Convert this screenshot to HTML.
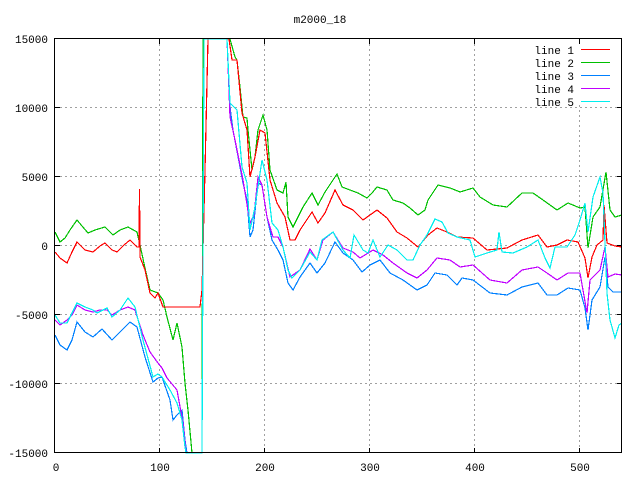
<!DOCTYPE html>
<html><head><meta charset="utf-8"><style>body{margin:0;background:#fff}svg{display:block}text{font-family:"Liberation Mono","DejaVu Sans Mono",monospace;font-size:11px;fill:#000}</style></head><body>
<svg width="640" height="480" viewBox="0 0 640 480" xmlns="http://www.w3.org/2000/svg">
<rect width="640" height="480" fill="#fff"/>
<g stroke="#a0a0a0" stroke-width="1" stroke-dasharray="2,3" shape-rendering="crispEdges">
<path d="M159.5 39V453M264.5 39V453M369.5 39V453M474.5 39V453M579.5 105V453"/>
<path d="M55 107.5H622M55 176.5H622M55 245.5H622M55 314.5H622M55 383.5H622"/>
</g>
<g fill="none" stroke-width="1.2" stroke-linejoin="miter" shape-rendering="crispEdges">
<polyline stroke="#00c000" points="55,232 60,242 65,238 70,230 77,220 82,226 88,233 95,230 105,227 113,235 120,230 128,227 137,232 140,245 145,268 150,290 158,293 163,300 167,317 173,340 177,323 182,347 185,383 188,410 192,453 202,453 203,39 229,39 230,39 235,57 237,60 240,87 243,117 247,118 248,130 252,170 255,157 258,130 263,115 267,130 270,170 277,190 283,193 286,182 288,217 293,227 303,207 312,193 318,205 325,192 337,174 342,187 350,190 358,193 367,198 372,193 377,187 387,190 393,200 403,203 410,208 418,215 425,210 428,200 438,185 450,188 460,192 473,188 480,197 493,205 507,207 522,193 533,193 543,200 557,210 568,203 580,208 585,207 588,248 593,217 600,207 606,172 610,210 615,217 622,215"/>
<polyline stroke="#ff0000" points="55,252 60,258 67,263 72,252 77,242 85,250 93,252 100,246 105,243 112,250 117,252 124,245 130,240 137,247 139,247 139.5,189 140,257 145,270 150,293 155,298 158,293 163,307 200,307 202,290 205,170 208,39 229,39 232,60 237,60 242,113 247,130 250,177 255,157 260,130 265,133 270,180 277,203 285,217 290,240 295,240 300,230 312,212 318,223 325,213 335,190 343,205 353,210 363,220 377,210 387,218 397,232 407,238 418,247 428,235 437,228 447,232 457,237 473,238 487,250 507,248 522,240 538,235 547,247 557,245 567,240 578,242 585,258 588,278 592,257 597,245 603,240 604,205 607,243 615,246 622,247"/>
<polyline stroke="#0080ff" points="55,335 60,345 67,350 72,340 77,322 85,332 93,337 102,329 112,340 120,332 130,322 137,327 145,357 153,382 158,378 162,377 170,400 173,420 177,415 182,410 185,440 187,453 202,453 204,39 227,39 230,107 233,130 240,167 243,183 247,200 250,237 253,230 258,183 262,185 267,217 272,240 278,250 283,260 288,283 293,290 300,277 310,263 317,273 325,263 335,242 343,253 353,260 362,272 370,265 380,260 390,273 403,280 417,290 427,285 435,273 447,275 457,285 462,278 473,280 490,293 507,295 522,287 538,283 547,295 557,295 568,288 580,290 585,308 588,330 592,300 600,287 605,257 608,287 613,292 622,292"/>
<polyline stroke="#c000ff" points="55,320 60,325 67,320 72,315 77,305 85,310 93,312 100,310 107,310 112,315 120,310 128,307 135,310 143,335 150,352 158,363 162,368 167,378 177,390 183,423 186,453 202,453 204,39 227,39 230,117 235,140 243,180 250,223 254,215 258,177 262,185 267,217 273,237 278,237 283,247 290,277 300,270 310,249 317,260 323,240 333,232 343,248 353,252 360,258 373,250 383,255 393,263 407,273 417,278 427,270 437,258 450,260 460,267 473,265 490,280 507,283 522,270 538,267 547,273 557,280 568,273 580,273 587,313 590,280 600,270 605,247 608,277 615,274 622,275"/>
<polyline stroke="#00eeee" points="55,315 60,323 67,323 72,313 77,303 85,307 93,310 97,313 107,308 112,317 120,310 128,298 135,307 143,340 153,377 158,374 162,377 170,390 177,403 182,420 185,447 186,453 202,453 204,39 227,39 230,103 237,110 242,167 247,183 250,230 255,207 262,160 267,180 272,223 278,230 283,247 288,270 292,278 300,270 310,252 317,260 322,240 333,232 343,250 350,258 354,235 363,250 368,253 373,240 380,257 388,245 397,250 407,260 413,260 420,245 427,235 435,219 442,222 448,233 457,237 470,240 475,257 487,253 497,250 499,232 502,252 513,253 527,247 538,240 545,258 550,268 555,247 567,247 575,235 580,220 585,203 588,232 593,197 600,177 603,193 607,293 610,320 615,338 619,325 622,323"/>
</g>
<rect x="481" y="40" width="140" height="65" fill="#fff"/>
<g text-anchor="end">
<text x="574" y="54">line 1</text>
<text x="574" y="67">line 2</text>
<text x="574" y="80">line 3</text>
<text x="574" y="93">line 4</text>
<text x="574" y="106">line 5</text>
</g>
<g stroke-width="1" shape-rendering="crispEdges">
<path d="M581 49.5H610" stroke="#ff0000"/>
<path d="M581 62.5H610" stroke="#00c000"/>
<path d="M581 75.5H610" stroke="#0080ff"/>
<path d="M581 88.5H610" stroke="#c000ff"/>
<path d="M581 101.5H610" stroke="#00eeee"/>
</g>
<rect x="54.5" y="38.5" width="567" height="414" fill="none" stroke="#000" shape-rendering="crispEdges"/>
<g stroke="#000" shape-rendering="crispEdges">
<path d="M55 107.5h5M55 176.5h5M55 245.5h5M55 314.5h5M55 383.5h5M622 107.5h-5M622 176.5h-5M622 245.5h-5M622 314.5h-5M622 383.5h-5"/>
<path d="M159.5 453v-5M264.5 453v-5M369.5 453v-5M474.5 453v-5M579.5 453v-5M159.5 39v5M264.5 39v5M369.5 39v5M474.5 39v5M579.5 39v5"/>
</g>
<g text-anchor="end">
<text x="48" y="43">15000</text>
<text x="48" y="112">10000</text>
<text x="48" y="181">5000</text>
<text x="48" y="250">0</text>
<text x="48" y="319">-5000</text>
<text x="48" y="388">-10000</text>
<text x="48" y="457">-15000</text>
</g>
<g text-anchor="middle">
<text x="56" y="471">0</text>
<text x="160" y="471">100</text>
<text x="265" y="471">200</text>
<text x="370" y="471">300</text>
<text x="475" y="471">400</text>
<text x="580" y="471">500</text>
<text x="320" y="23">m2000_18</text>
</g>
</svg>
</body></html>
